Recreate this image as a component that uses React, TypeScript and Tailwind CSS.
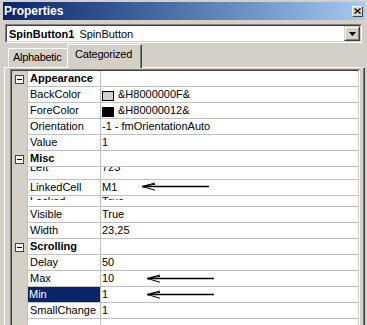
import React from "react";

type Prop = {
  name: string;
  value?: string;
  swatch?: string;
  cut?: "top" | "bottom";
  selected?: boolean;
  arrow?: "linked" | "scroll";
};

type Category = { title: string; props: Prop[] };

const categories: Category[] = [
  {
    title: "Appearance",
    props: [
      { name: "BackColor", value: "&H8000000F&", swatch: "bg-[#d4d0c8]" },
      { name: "ForeColor", value: "&H80000012&", swatch: "bg-black" },
      { name: "Orientation", value: "-1 - fmOrientationAuto" },
      { name: "Value", value: "1" },
    ],
  },
  {
    title: "Misc",
    props: [
      { name: "Left", value: "723", cut: "top" },
      { name: "LinkedCell", value: "M1", arrow: "linked" },
      { name: "Locked", value: "True", cut: "bottom" },
      { name: "Visible", value: "True" },
      { name: "Width", value: "23,25" },
    ],
  },
  {
    title: "Scrolling",
    props: [
      { name: "Delay", value: "50" },
      { name: "Max", value: "10", arrow: "scroll" },
      { name: "Min", value: "1", arrow: "scroll", selected: true },
      { name: "SmallChange", value: "1" },
    ],
  },
];

const LINE = "border-[#c0c0c0]";

function Arrow({ kind }: { kind: "linked" | "scroll" }) {
  const pos = kind === "linked" ? "left-[40px] top-[1px]" : "left-[45px] top-[2px]";
  return (
    <svg width="68" height="11" className={`absolute ${pos}`}>
      <line x1="1" y1="5.5" x2="68" y2="5.5" stroke="#000" strokeWidth="1.3" />
      <path
        d="M1 5.5 L14 2 M1 5.5 L14 9.2 M5 4.6 L14 3.4"
        stroke="#000"
        strokeWidth="1"
        fill="none"
      />
    </svg>
  );
}

function CollapseBox() {
  return (
    <div className="mt-[4px] w-[9px] h-[9px] border border-[#404040] bg-white flex items-center justify-center">
      <div className="w-[5px] h-[1px] bg-black" />
    </div>
  );
}

function Cell({ text, cut }: { text: string; cut?: "top" | "bottom" }) {
  if (cut === "top") {
    return <div className="-mt-[7px] leading-[15px] whitespace-nowrap">{text}</div>;
  }
  if (cut === "bottom") {
    return (
      <div className="h-[4px] overflow-hidden">
        <div className="-mt-[2px] leading-[15px] whitespace-nowrap">{text}</div>
      </div>
    );
  }
  return <div className="leading-[15px] whitespace-nowrap">{text}</div>;
}

function PropRow({ p }: { p: Prop }) {
  const h = p.cut === "top" ? "h-[13px]" : p.cut === "bottom" ? "h-[11px]" : "h-[16px]";
  return (
    <div className={`flex ${h}`}>
      <div className={`w-[16px] shrink-0 bg-[#d4d0c8] border-r ${LINE}`} />
      <div
        className={`w-[73px] shrink-0 border-r border-b ${LINE} overflow-hidden ${
          p.selected ? "bg-[#0a246a] text-white pl-[1px]" : "pl-[2px]"
        }`}
      >
        <Cell text={p.name} cut={p.cut} />
      </div>
      <div className={`relative flex-1 border-b ${LINE} overflow-hidden pl-[1px]`}>
        {p.swatch ? (
          <div className="flex">
            <div className={`mt-[4px] w-[12px] h-[10px] border border-black ${p.swatch}`} />
            <div className="ml-[4px]">
              <Cell text={p.value ?? ""} />
            </div>
          </div>
        ) : (
          <Cell text={p.value ?? ""} cut={p.cut} />
        )}
        {p.arrow && <Arrow kind={p.arrow} />}
      </div>
    </div>
  );
}

function CategoryRow({ title }: { title: string }) {
  return (
    <div className="flex h-[16px]">
      <div className={`w-[16px] shrink-0 bg-[#d4d0c8] border-r ${LINE} flex justify-center`}>
        <CollapseBox />
      </div>
      <div className={`w-[73px] shrink-0 border-r border-b ${LINE} pl-[2px] font-bold leading-[15px]`}>
        {title}
      </div>
      <div className={`flex-1 border-b ${LINE}`} />
    </div>
  );
}

export default function App() {
  return (
    <div className="w-[367px] h-[325px] overflow-hidden bg-[#d4d0c8] text-black text-[11px] font-['Liberation_Sans',Arial,sans-serif]">
      {/* Title bar */}
      <div className="mt-[2px] ml-[3px] mr-[2px] h-[18px] bg-linear-to-r from-[#0a246a] to-[#a6caf0] flex items-center justify-between pl-[1px] pr-[2px]">
        <span className="text-white font-bold text-[12px] leading-[18px]">Properties</span>
        <div className="w-[11px] h-[11px] border border-t-white border-l-white border-b-[#404040] border-r-[#404040] bg-[#d4d0c8] flex items-center justify-center">
          <svg width="7" height="6" viewBox="0 0 7 6">
            <path d="M0.5 0.5 L6.5 5.5 M6.5 0.5 L0.5 5.5" stroke="#000" strokeWidth="1.2" />
          </svg>
        </div>
      </div>

      {/* Object combo box */}
      <div className="mt-[4px] ml-[5px] w-[357px] h-[19px] border border-t-[#808080] border-l-[#808080] border-b-white border-r-white">
        <div className="h-full border border-t-[#404040] border-l-[#404040] border-b-[#d4d0c8] border-r-[#d4d0c8] bg-white flex items-center">
          <div className="flex-1 pl-[2px] leading-[15px] pt-[1px] whitespace-nowrap">
            <span className="font-bold">SpinButton1</span>
            <span className="ml-[5px]">SpinButton</span>
          </div>
          <div className="w-[16px] h-[15px] border border-t-[#d4d0c8] border-l-[#d4d0c8] border-b-[#404040] border-r-[#404040]">
            <div className="h-full border border-t-white border-l-white border-b-[#808080] border-r-[#808080] bg-[#d4d0c8] flex items-center justify-center">
              <svg width="7" height="4" viewBox="0 0 7 4">
                <path d="M0 0 H7 L3.5 4 Z" fill="#000" />
              </svg>
            </div>
          </div>
        </div>
      </div>

      {/* Tabs */}
      <div className="h-[24px] ml-[8px] flex items-end">
        <div className="w-[59px] h-[19px] border-t border-l border-white pl-[4px] pt-[1px] leading-[15px] whitespace-nowrap tracking-[-0.3px]">
          Alphabetic
        </div>
        <div className="relative z-10 -mb-px w-[75px] h-[24px] border-t border-l border-white border-r border-r-[#404040] bg-[#d4d0c8]">
          <div className="h-full border-r border-[#808080] pl-[7px] pt-[2px] leading-[15px] whitespace-nowrap tracking-[-0.2px]">
            Categorized
          </div>
        </div>
      </div>

      {/* Tab panel */}
      <div className="ml-[4px] w-[361px] h-[260px] border-t border-l border-white border-r border-r-[#404040]">
        <div className="h-full border-r border-[#808080] pt-[1px] pl-[5px] pr-[3px]">
          <div className="h-full border-t border-l border-t-[#808080] border-l-[#808080] border-r border-r-white">
            <div className="h-full border-t border-l border-t-[#404040] border-l-[#404040] border-r border-r-[#d4d0c8] bg-white overflow-hidden">
              {categories.map((c) => (
                <div key={c.title}>
                  <CategoryRow title={c.title} />
                  {c.props.map((p) => (
                    <PropRow key={p.name} p={p} />
                  ))}
                </div>
              ))}
              <div className="flex h-[16px]">
                <div className={`w-[16px] shrink-0 bg-[#d4d0c8] border-r ${LINE}`} />
                <div className={`w-[73px] shrink-0 border-r ${LINE}`} />
                <div className="flex-1" />
              </div>
            </div>
          </div>
        </div>
      </div>
    </div>
  );
}
